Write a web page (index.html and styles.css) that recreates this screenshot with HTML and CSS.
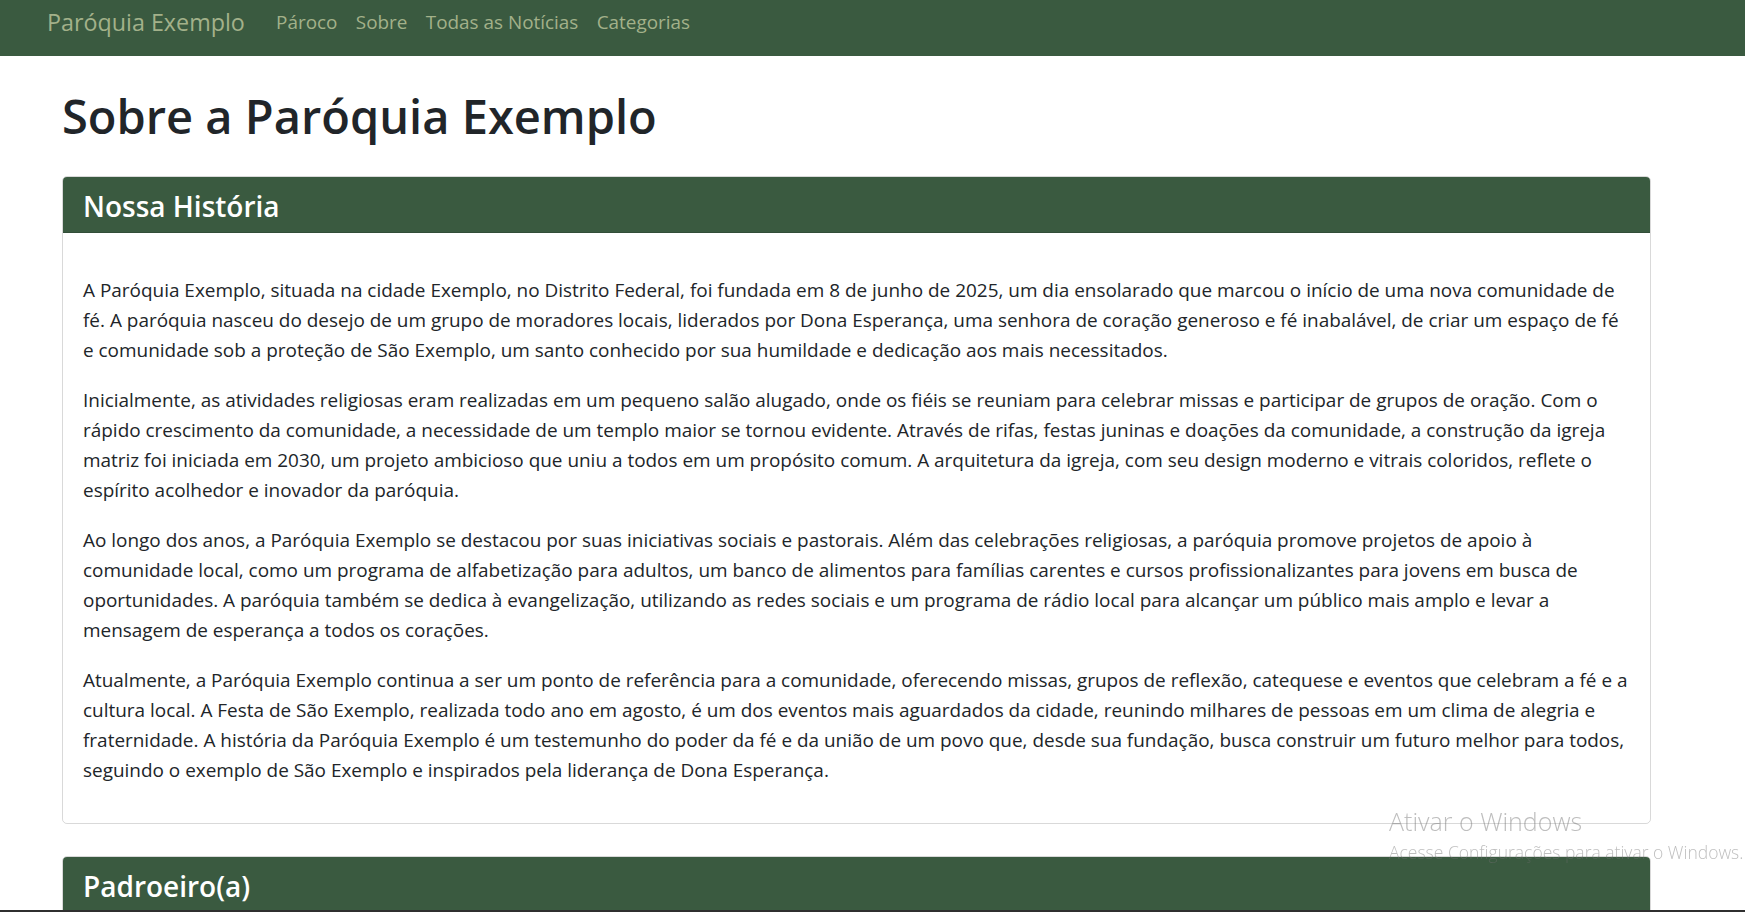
FILE: index.html
```html
<!DOCTYPE html>
<html lang="pt-BR">
<head>
<meta charset="utf-8">
<title>Sobre a Paróquia Exemplo</title>
<link rel="stylesheet" href="styles.css">
</head>
<body>
<nav class="navbar">
  <a class="brand" href="#">Paróquia Exemplo</a>
  <ul class="nav-links">
    <li><a href="#">Pároco</a></li>
    <li><a href="#">Sobre</a></li>
    <li><a href="#">Todas as Notícias</a></li>
    <li><a href="#">Categorias</a></li>
  </ul>
</nav>
<main class="page">
  <h1 class="page-title">Sobre a Paróquia Exemplo</h1>
  <section class="card">
    <h2 class="card-header">Nossa História</h2>
    <div class="card-body">
      <p>A Paróquia Exemplo, situada na cidade Exemplo, no Distrito Federal, foi fundada em 8 de junho de 2025, um dia ensolarado que marcou o início de uma nova comunidade de fé. A paróquia nasceu do desejo de um grupo de moradores locais, liderados por Dona Esperança, uma senhora de coração generoso e fé inabalável, de criar um espaço de fé e comunidade sob a proteção de São Exemplo, um santo conhecido por sua humildade e dedicação aos mais necessitados.</p>
      <p>Inicialmente, as atividades religiosas eram realizadas em um pequeno salão alugado, onde os fiéis se reuniam para celebrar missas e participar de grupos de oração. Com o rápido crescimento da comunidade, a necessidade de um templo maior se tornou evidente. Através de rifas, festas juninas e doações da comunidade, a construção da igreja matriz foi iniciada em 2030, um projeto ambicioso que uniu a todos em um propósito comum. A arquitetura da igreja, com seu design moderno e vitrais coloridos, reflete o espírito acolhedor e inovador da paróquia.</p>
      <p>Ao longo dos anos, a Paróquia Exemplo se destacou por suas iniciativas sociais e pastorais. Além das celebrações religiosas, a paróquia promove projetos de apoio à comunidade local, como um programa de alfabetização para adultos, um banco de alimentos para famílias carentes e cursos profissionalizantes para jovens em busca de oportunidades. A paróquia também se dedica à evangelização, utilizando as redes sociais e um programa de rádio local para alcançar um público mais amplo e levar a mensagem de esperança a todos os corações.</p>
      <p>Atualmente, a Paróquia Exemplo continua a ser um ponto de referência para a comunidade, oferecendo missas, grupos de reflexão, catequese e eventos que celebram a fé e a cultura local. A Festa de São Exemplo, realizada todo ano em agosto, é um dos eventos mais aguardados da cidade, reunindo milhares de pessoas em um clima de alegria e fraternidade. A história da Paróquia Exemplo é um testemunho do poder da fé e da união de um povo que, desde sua fundação, busca construir um futuro melhor para todos, seguindo o exemplo de São Exemplo e inspirados pela liderança de Dona Esperança.</p>
    </div>
  </section>
  <section class="card">
    <h2 class="card-header">Padroeiro(a)</h2>
    <div class="card-body">
      <p>São Exemplo é o padroeiro da paróquia.</p>
    </div>
  </section>
</main>
<div class="activation">
  <div class="activation-title">Ativar o Windows</div>
  <div class="activation-sub">Acesse Configurações para ativar o Windows.</div>
</div>
<div class="taskbar-edge"></div>
</body>
</html>
```

FILE: styles.css
```css
html, body {
  margin: 0;
  padding: 0;
  background: #ffffff;
}

body {
  font-family: "Open Sans", "Noto Sans", "Liberation Sans", sans-serif;
  color: #212529;
  overflow: hidden;
  height: 912px;
}

.navbar {
  display: flex;
  align-items: flex-start;
  height: 56px;
  box-sizing: border-box;
  padding: 6px 0 0 47px;
  background: #3a5a40;
}

.brand {
  font-size: 23.3px;
  line-height: 32px;
  color: #a3b18a;
  text-decoration: none;
  margin-right: 22px;
}

.nav-links {
  display: flex;
  list-style: none;
  margin: 2px 0 0;
  padding: 0;
}

.nav-links a {
  display: block;
  padding: 0 9.2px;
  font-size: 18.9px;
  line-height: 28px;
  color: #a3b18a;
  text-decoration: none;
}

.page {
  padding: 32px 94px 0 62px;
}

.page-title {
  margin: 0 0 31px;
  font-size: 47px;
  line-height: 57px;
  font-weight: 600;
}

.card {
  border: 1px solid rgba(0, 0, 0, 0.15);
  border-radius: 5px;
  margin-bottom: 32px;
  overflow: hidden;
}

.card-header {
  margin: 0;
  padding: 12px 20px 9px;
  font-size: 28px;
  line-height: 34px;
  font-weight: 600;
  color: #ffffff;
  background: #3a5a40;
  border-bottom: 1px solid rgba(0, 0, 0, 0.125);
}

.card-body {
  padding: 42px 20px 18px;
}

.card-body p {
  margin: 0 0 20px;
  font-size: 18.95px;
  line-height: 30px;
}

.activation {
  position: fixed;
  left: 1389px;
  top: 805px;
  color: rgba(110, 110, 110, 0.45);
  font-weight: 300;
  white-space: nowrap;
}

.activation-title {
  font-size: 25px;
  line-height: 32px;
}

.activation-sub {
  font-size: 17.5px;
  line-height: 30px;
}

.taskbar-edge {
  position: fixed;
  left: 0;
  right: 0;
  bottom: 0;
  height: 2px;
  background: #2f2f2f;
}
```
